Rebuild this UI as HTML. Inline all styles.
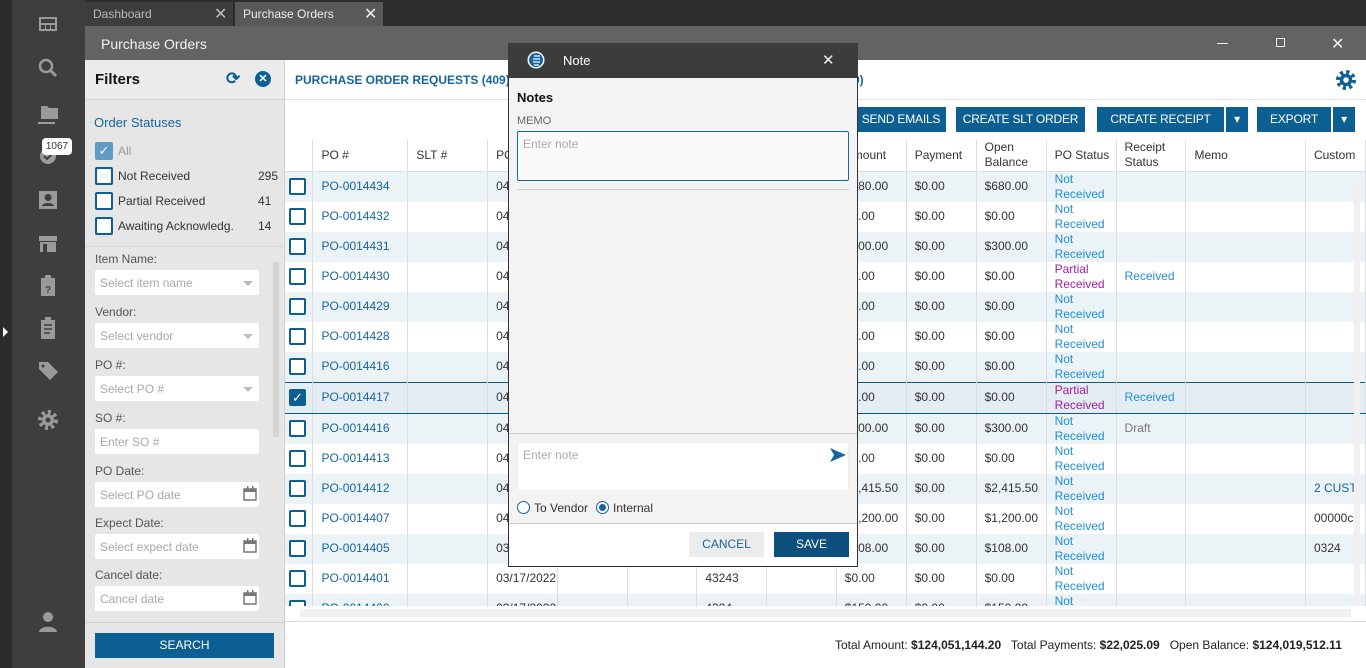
<!DOCTYPE html>
<html><head><meta charset="utf-8"><style>
*{box-sizing:border-box;margin:0;padding:0}
body{width:1366px;height:668px;overflow:hidden;font-family:"Liberation Sans",sans-serif;font-size:12px;color:#333;background:#fff;position:relative}
.a{position:absolute}
.ic{fill:#9a9a9a}
table{border-collapse:collapse;table-layout:fixed;position:absolute;left:285px;top:140px}
td,th{height:30px;border-right:1px solid #ddd;font-weight:normal;text-align:left;padding-left:8px;font-size:12px;white-space:nowrap;overflow:hidden;line-height:15px}
th{height:31px;border-bottom:1px solid #ddd;color:#333}
tr.s td{background:#ebf3f7}
tr.sel td{background:#e3edf3;border-top:1px solid #0c5a8a;border-bottom:1px solid #0c5a8a}
.cb{width:17px;height:17px;border:2px solid #0c5f92;border-radius:2px;background:#fff;margin-left:-4px}
.po{color:#1565a0}
.nr{color:#1e90d8}
.pr{color:#a020a0}
.inp{position:absolute;left:95px;width:164px;height:25px;background:#fff;border-radius:2px;color:#a8a8a8;padding:6px 5px;font-size:12px}
.lbl{position:absolute;left:95px;color:#555;font-size:12px}
.btn{position:absolute;top:107px;height:25px;background:#0c5f92;color:#fff;font-size:12px;text-align:center;line-height:25px;letter-spacing:-0.2px}
.tri{position:absolute;right:6px;top:11px;border-left:5px solid transparent;border-right:5px solid transparent;border-top:5px solid #bbb}
</style></head><body>
<div class="a" style="left:0;top:0;width:12px;height:668px;background:#2b2b2b"></div>
<div class="a" style="left:12px;top:0;width:73px;height:668px;background:#3e3e3e"></div>
<div class="a" style="left:3px;top:327px;border-top:5px solid transparent;border-bottom:5px solid transparent;border-left:5px solid #fff"></div>
<svg class="a" style="left:36px;top:12px" width="24" height="630" viewBox="0 0 24 630">
<g class="ic">
<path d="M3 5h18v14H3z M5 7v4h14V7z M5 13v4h4v-4z M10 13v4h4v-4z M15 13v4h4v-4z" fill-rule="evenodd"/>
<circle cx="10" cy="54" r="6" fill="none" stroke="#9a9a9a" stroke-width="2.5"/><path d="M14 58l6 6" stroke="#9a9a9a" stroke-width="3"/>
<path d="M5 94h6l2 2h9v11H5z"/><path d="M2 98v12h17v2H2z"/>
<circle cx="12" cy="144" r="8"/><path d="M8 144l3 3 5-5" stroke="#3e3e3e" stroke-width="2" fill="none"/>
<path d="M3 179h18v18H3z M12 182a3.5 3.5 0 1 0 0.1 0z M6 194c1-4 11-4 12 0z" fill-rule="evenodd"/>
<path d="M3 224h18v5H3z M4 230h16v10H4z M7 232h4v8H7z" fill-rule="evenodd"/>
<path d="M5 266h14v18H5z M9 263h6v4H9z"/><text x="12" y="281" font-size="10" font-weight="bold" fill="#3e3e3e" text-anchor="middle" font-family="Liberation Sans">?</text>
<path d="M5 308h14v19H5z M9 305h6v4H9z"/><path d="M8 313h8M8 317h8M8 321h6" stroke="#3e3e3e" stroke-width="1.5"/>
<path d="M3 350h9l10 10-8 8-11-11z"/><circle cx="7" cy="354" r="1.5" fill="#3e3e3e"/>
<circle cx="12" cy="408" r="6"/><circle cx="12" cy="408" r="8" fill="none" stroke="#9a9a9a" stroke-width="4" stroke-dasharray="3.1 3.1"/><circle cx="12" cy="408" r="2.5" fill="#3e3e3e"/>
<circle cx="12" cy="605" r="5"/><path d="M3 620c1-7 17-7 18 0z"/>
</g></svg>
<div class="a" style="left:42px;top:138px;width:30px;height:17px;background:#fff;border-radius:4px;font-size:10px;color:#333;text-align:center;line-height:17px">1067</div>
<div class="a" style="left:85px;top:0;width:1281px;height:26px;background:#2d2d2d"></div>
<div class="a" style="left:85px;top:2px;width:148px;height:24px;background:#3d3d3d;color:#bbb;padding:5px 8px;font-size:12px">Dashboard<span class="a" style="left:129px;top:2px;font-size:16px;color:#bbb">✕</span></div>
<div class="a" style="left:235px;top:2px;width:148px;height:24px;background:#595959;color:#eee;padding:5px 8px;font-size:12px">Purchase Orders<span class="a" style="left:129px;top:2px;font-size:16px;color:#eee">✕</span></div>
<div class="a" style="left:85px;top:26px;width:1281px;height:34px;background:#636363"></div>
<div class="a" style="left:101px;top:36px;color:#f2f2f2;font-size:14px">Purchase Orders</div>
<div class="a" style="left:1217px;top:43px;width:11px;height:1px;background:#eee"></div>
<div class="a" style="left:1276px;top:38px;width:9px;height:9px;border:1px solid #eee"></div>
<div class="a" style="left:1331px;top:34px;color:#eee;font-size:16px">✕</div>
<div class="a" style="left:85px;top:60px;width:200px;height:608px;background:#e6e6e6"></div>
<div class="a" style="left:85px;top:60px;width:200px;height:40px;background:#ebebeb;border-bottom:1px solid #d5d5d5"></div>
<div class="a" style="left:95px;top:71px;font-size:15px;font-weight:bold;color:#111">Filters</div>
<div class="a" style="left:226px;top:69px;font-size:17px;color:#0c5f92;font-weight:bold">⟳</div>
<div class="a" style="left:255px;top:71px;width:16px;height:16px;border-radius:50%;background:#0c5f92;color:#fff;font-size:11px;text-align:center;line-height:16px;font-weight:bold">✕</div>
<div class="a" style="left:94px;top:115px;font-size:13px;color:#1565a0">Order Statuses</div>
<div class="a" style="left:95px;top:142px;width:18px;height:18px;background:#5f9cc4;border-radius:2px;color:#fff;text-align:center;font-size:13px;line-height:18px">✓</div>
<div class="a" style="left:118px;top:144px;color:#999">All</div>
<div class="a cb" style="left:99px;top:167px;width:18px;height:18px"></div><div class="a" style="left:118px;top:169px">Not Received</div><div class="a" style="left:258px;top:169px">295</div>
<div class="a cb" style="left:99px;top:192px;width:18px;height:18px"></div><div class="a" style="left:118px;top:194px">Partial Received</div><div class="a" style="left:258px;top:194px">41</div>
<div class="a cb" style="left:99px;top:217px;width:18px;height:18px"></div><div class="a" style="left:118px;top:219px">Awaiting Acknowledg.</div><div class="a" style="left:258px;top:219px">14</div>
<div class="a" style="left:85px;top:246px;width:200px;height:1px;background:#d5d5d5"></div>
<div class="a" style="left:273px;top:262px;width:6px;height:175px;background:#d4d4d4"></div>
<div class="lbl" style="top:252px">Item Name:</div><div class="inp" style="top:270px">Select item name<div class="tri"></div></div>
<div class="lbl" style="top:305px">Vendor:</div><div class="inp" style="top:323px">Select vendor<div class="tri"></div></div>
<div class="lbl" style="top:358px">PO #:</div><div class="inp" style="top:376px">Select PO #<div class="tri"></div></div>
<div class="lbl" style="top:411px">SO #:</div><div class="inp" style="top:429px">Enter SO #</div>
<div class="lbl" style="top:464px">PO Date:</div><div class="inp" style="top:482px">Select PO date</div>
<div class="lbl" style="top:516px">Expect Date:</div><div class="inp" style="top:534px">Select expect date</div>
<div class="lbl" style="top:568px">Cancel date:</div><div class="inp" style="top:586px">Cancel date</div>
<svg class="a" style="left:243px;top:486px" width="14" height="120"><g fill="none" stroke="#777" stroke-width="1.5"><rect x="1" y="3" width="12" height="11"/><rect x="1" y="55" width="12" height="11"/><rect x="1" y="107" width="12" height="11"/></g><g fill="#777"><rect x="1" y="3" width="12" height="3"/><rect x="1" y="55" width="12" height="3"/><rect x="1" y="107" width="12" height="3"/><rect x="4" y="0" width="1.5" height="4"/><rect x="9" y="0" width="1.5" height="4"/><rect x="4" y="52" width="1.5" height="4"/><rect x="9" y="52" width="1.5" height="4"/><rect x="4" y="104" width="1.5" height="4"/><rect x="9" y="104" width="1.5" height="4"/></g></svg>
<div class="a" style="left:85px;top:622px;width:200px;height:1px;background:#d0d0d0"></div>
<div class="a" style="left:95px;top:633px;width:179px;height:25px;background:#0c5f92;color:#fff;text-align:center;line-height:25px">SEARCH</div>
<div class="a" style="left:284px;top:60px;width:1px;height:608px;background:#d0d0d0"></div>
<div class="a" style="left:295px;top:73px;font-size:12px;font-weight:bold;color:#1565a0">PURCHASE ORDER REQUESTS (409)</div>
<div class="a" style="left:853px;top:73px;font-size:12px;font-weight:bold;color:#1565a0">9)</div>
<div class="a" style="left:285px;top:99px;width:1081px;height:1px;background:#e2e2e2"></div>
<svg class="a" style="left:1336px;top:70px" width="20" height="20" viewBox="0 0 24 24"><circle cx="12" cy="12" r="7.5" fill="#0c5f92"/><circle cx="12" cy="12" r="9.5" fill="none" stroke="#0c5f92" stroke-width="5" stroke-dasharray="3.7 3.76"/><circle cx="12" cy="12" r="3.3" fill="#fff"/></svg>
<div class="btn" style="left:856px;width:90px">SEND EMAILS</div>
<div class="btn" style="left:956px;width:129px">CREATE SLT ORDER</div>
<div class="btn" style="left:1097px;width:127px">CREATE RECEIPT</div>
<div class="btn" style="left:1226px;width:22px">▾</div>
<div class="btn" style="left:1257px;width:74px">EXPORT</div>
<div class="btn" style="left:1333px;width:22px">▾</div>
<table>
<colgroup><col style="width:28px"><col style="width:95px"><col style="width:80px"><col style="width:70px"><col style="width:70px"><col style="width:70px"><col style="width:70px"><col style="width:70px"><col style="width:70px"><col style="width:70px"><col style="width:70px"><col style="width:70px"><col style="width:70px"><col style="width:120px"><col style="width:60px"></colgroup>
<tr><th style="border-right:1px solid #ddd"></th><th>PO #</th><th>SLT #</th><th>PO Date</th><th></th><th></th><th></th><th></th><th>Amount</th><th>Payment</th><th>Open<br>Balance</th><th>PO Status</th><th>Receipt<br>Status</th><th>Memo</th><th>Custom</th></tr>
<tr class="s"><td><div class="cb"></div></td><td class="po">PO-0014434</td><td></td><td>04/</td><td></td><td></td><td></td><td></td><td>$680.00</td><td>$0.00</td><td>$680.00</td><td class="nr">Not<br>Received</td><td></td><td></td><td></td></tr>
<tr><td><div class="cb"></div></td><td class="po">PO-0014432</td><td></td><td>04/</td><td></td><td></td><td></td><td></td><td>$0.00</td><td>$0.00</td><td>$0.00</td><td class="nr">Not<br>Received</td><td></td><td></td><td></td></tr>
<tr class="s"><td><div class="cb"></div></td><td class="po">PO-0014431</td><td></td><td>04/</td><td></td><td></td><td></td><td></td><td>$300.00</td><td>$0.00</td><td>$300.00</td><td class="nr">Not<br>Received</td><td></td><td></td><td></td></tr>
<tr><td><div class="cb"></div></td><td class="po">PO-0014430</td><td></td><td>04/</td><td></td><td></td><td></td><td></td><td>$0.00</td><td>$0.00</td><td>$0.00</td><td class="pr">Partial<br>Received</td><td class="nr">Received</td><td></td><td></td></tr>
<tr class="s"><td><div class="cb"></div></td><td class="po">PO-0014429</td><td></td><td>04/</td><td></td><td></td><td></td><td></td><td>$0.00</td><td>$0.00</td><td>$0.00</td><td class="nr">Not<br>Received</td><td></td><td></td><td></td></tr>
<tr><td><div class="cb"></div></td><td class="po">PO-0014428</td><td></td><td>04/</td><td></td><td></td><td></td><td></td><td>$0.00</td><td>$0.00</td><td>$0.00</td><td class="nr">Not<br>Received</td><td></td><td></td><td></td></tr>
<tr class="s"><td><div class="cb"></div></td><td class="po">PO-0014416</td><td></td><td>04/</td><td></td><td></td><td></td><td></td><td>$0.00</td><td>$0.00</td><td>$0.00</td><td class="nr">Not<br>Received</td><td></td><td></td><td></td></tr>
<tr class="sel"><td><div class="cb" style="background:#0c5f92;color:#fff;text-align:center;line-height:13px;font-size:13px">✓</div></td><td class="po">PO-0014417</td><td></td><td>04/</td><td></td><td></td><td></td><td></td><td>$0.00</td><td>$0.00</td><td>$0.00</td><td class="pr">Partial<br>Received</td><td class="nr">Received</td><td></td><td></td></tr>
<tr class="s"><td><div class="cb"></div></td><td class="po">PO-0014416</td><td></td><td>04/</td><td></td><td></td><td></td><td></td><td>$300.00</td><td>$0.00</td><td>$300.00</td><td class="nr">Not<br>Received</td><td style="color:#777">Draft</td><td></td><td></td></tr>
<tr><td><div class="cb"></div></td><td class="po">PO-0014413</td><td></td><td>04/</td><td></td><td></td><td></td><td></td><td>$0.00</td><td>$0.00</td><td>$0.00</td><td class="nr">Not<br>Received</td><td></td><td></td><td></td></tr>
<tr class="s"><td><div class="cb"></div></td><td class="po">PO-0014412</td><td></td><td>04/</td><td></td><td></td><td></td><td></td><td>$2,415.50</td><td>$0.00</td><td>$2,415.50</td><td class="nr">Not<br>Received</td><td></td><td></td><td class="po">2 CUST</td></tr>
<tr><td><div class="cb"></div></td><td class="po">PO-0014407</td><td></td><td>04/</td><td></td><td></td><td></td><td></td><td>$1,200.00</td><td>$0.00</td><td>$1,200.00</td><td class="nr">Not<br>Received</td><td></td><td></td><td>00000c</td></tr>
<tr class="s"><td><div class="cb"></div></td><td class="po">PO-0014405</td><td></td><td>03/</td><td></td><td></td><td></td><td></td><td>$108.00</td><td>$0.00</td><td>$108.00</td><td class="nr">Not<br>Received</td><td></td><td></td><td>0324</td></tr>
<tr><td><div class="cb"></div></td><td class="po">PO-0014401</td><td></td><td>03/17/2022</td><td></td><td></td><td>43243</td><td></td><td>$0.00</td><td>$0.00</td><td>$0.00</td><td class="nr">Not<br>Received</td><td></td><td></td><td></td></tr>
<tr class="s"><td><div class="cb"></div></td><td class="po">PO-0014400</td><td></td><td>03/17/2022</td><td></td><td></td><td>4324</td><td></td><td>$150.00</td><td>$0.00</td><td>$150.00</td><td class="nr">Not<br>Received</td><td></td><td></td><td></td></tr>
</table>
<div class="a" style="left:285px;top:606px;width:1081px;height:62px;background:#fff"></div>
<div class="a" style="left:300px;top:609px;width:1051px;height:8px;background:#f0f0f0"></div>
<div class="a" style="left:285px;top:621px;width:1081px;height:1px;background:#ddd"></div>
<div class="a" style="left:1354px;top:185px;width:6px;height:420px;background:#f0f0f0"></div>
<div class="a" style="left:835px;top:638px;font-size:12px;color:#222">Total Amount: <b>$124,051,144.20</b>&nbsp;&nbsp; Total Payments: <b>$22,025.09</b>&nbsp;&nbsp; Open Balance: <b>$124,019,512.11</b></div>
<div class="a" style="left:508px;top:43px;width:350px;height:524px;background:#f3f3f3;border:1px solid #333"></div>
<div class="a" style="left:508px;top:43px;width:350px;height:35px;background:#3c3c3c"></div>
<svg class="a" style="left:527px;top:51px" width="18" height="18"><circle cx="9" cy="9" r="8.5" fill="#fff"/><circle cx="9" cy="9" r="7" fill="#1565a0"/><path d="M7 5h6M6 8h7M6 11h7M7 14h5" stroke="#fff" stroke-width="1.3"/></svg>
<div class="a" style="left:563px;top:53px;color:#fff;font-size:13px">Note</div>
<div class="a" style="left:822px;top:51px;color:#eee;font-size:15px">✕</div>
<div class="a" style="left:517px;top:90px;font-size:13px;font-weight:bold;color:#111">Notes</div>
<div class="a" style="left:517px;top:115px;font-size:11px;color:#666">MEMO</div>
<div class="a" style="left:517px;top:131px;width:332px;height:50px;background:#fafafa;border:1px solid #1565a0;border-radius:2px;color:#aaa;padding:5px 5px;font-size:12px">Enter note</div>
<div class="a" style="left:517px;top:189px;width:332px;height:1px;background:#ccc"></div>
<div class="a" style="left:509px;top:433px;width:348px;height:1px;background:#ccc"></div>
<div class="a" style="left:517px;top:442px;width:332px;height:49px;background:#fff;border:1px solid #eee;color:#aaa;padding:5px 5px;font-size:12px">Enter note</div>
<svg class="a" style="left:829px;top:447px" width="18" height="16"><path d="M1 1l16 7-16 7 4-7z" fill="#1565a0"/></svg>
<div class="a" style="left:517px;top:501px;width:13px;height:13px;border:1px solid #1565a0;border-radius:50%;background:#fff"></div>
<div class="a" style="left:534px;top:501px;font-size:12px">To Vendor</div>
<div class="a" style="left:596px;top:501px;width:13px;height:13px;border:1px solid #1565a0;border-radius:50%;background:#fff"></div>
<div class="a" style="left:599px;top:504px;width:7px;height:7px;border-radius:50%;background:#1565a0"></div>
<div class="a" style="left:613px;top:501px;font-size:12px">Internal</div>
<div class="a" style="left:509px;top:523px;width:348px;height:1px;background:#ccc"></div>
<div class="a" style="left:509px;top:524px;width:348px;height:42px;background:#fff"></div>
<div class="a" style="left:689px;top:532px;width:75px;height:25px;background:#ececec;color:#1565a0;text-align:center;line-height:25px">CANCEL</div>
<div class="a" style="left:774px;top:532px;width:75px;height:25px;background:#0c4f7c;color:#fff;text-align:center;line-height:25px">SAVE</div>
</body></html>
